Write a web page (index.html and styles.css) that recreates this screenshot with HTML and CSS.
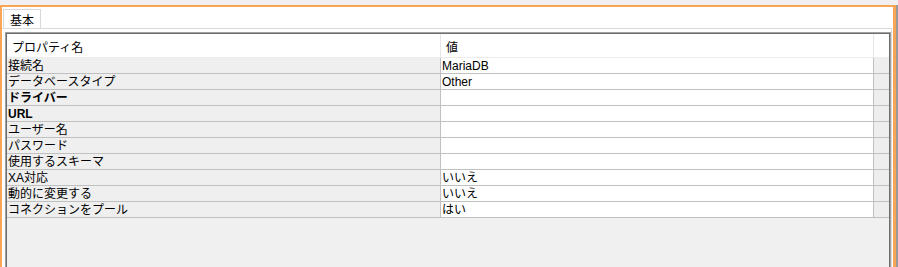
FILE: index.html
```html
<!DOCTYPE html>
<html lang="ja">
<head>
<meta charset="utf-8">
<link rel="stylesheet" href="styles.css">
</head>
<body>
<div class="screen">
  <div class="topband"></div>
  <div class="outer">
    <div class="frame">
      <div class="tabs"><div class="tab">基本</div></div>
      <div class="panel">
        <div class="grid">
          <div class="row head">
            <div class="cell label">プロパティ名</div>
            <div class="cell value">値</div>
            <div class="cell pad"></div>
          </div>
          <div class="row"><div class="cell label">接続名</div><div class="cell value">MariaDB</div><div class="cell pad"></div></div>
          <div class="row"><div class="cell label">データベースタイプ</div><div class="cell value">Other</div><div class="cell pad"></div></div>
          <div class="row"><div class="cell label bold">ドライバー</div><div class="cell value"></div><div class="cell pad"></div></div>
          <div class="row"><div class="cell label bold">URL</div><div class="cell value"></div><div class="cell pad"></div></div>
          <div class="row"><div class="cell label">ユーザー名</div><div class="cell value"></div><div class="cell pad"></div></div>
          <div class="row"><div class="cell label">パスワード</div><div class="cell value"></div><div class="cell pad"></div></div>
          <div class="row"><div class="cell label">使用するスキーマ</div><div class="cell value"></div><div class="cell pad"></div></div>
          <div class="row"><div class="cell label">XA対応</div><div class="cell value">いいえ</div><div class="cell pad"></div></div>
          <div class="row"><div class="cell label">動的に変更する</div><div class="cell value">いいえ</div><div class="cell pad"></div></div>
          <div class="row"><div class="cell label">コネクションをプール</div><div class="cell value">はい</div><div class="cell pad"></div></div>
        </div>
      </div>
    </div>
  </div>
</div>
</body>
</html>
```
FILE: styles.css
```css
* { box-sizing: border-box; }
html, body { margin: 0; padding: 0; }
body {
  background: #f0f0f0;
  font-family: "Liberation Sans", "Noto Sans CJK JP", sans-serif;
  font-size: 12px;
  color: #000;
}
.screen {
  width: 898px;
  height: 267px;
  overflow: hidden;
  display: flex;
  flex-direction: column;
}
.topband { height: 5px; background: #f0f0f0; flex: none; }
.outer {
  flex: 1;
  display: flex;
  border-right: 2px solid #9a9a9a;
}
.frame {
  flex: 1;
  display: flex;
  flex-direction: column;
  background: #fff;
  border-top: 2px solid #f8a557;
  border-left: 2px solid #f8a557;
  border-right: 3px solid #f8a557;
}
.tabs {
  height: 21px;
  flex: none;
  display: flex;
  align-items: flex-end;
  padding-left: 1px;
}
.tab {
  width: 38px;
  height: 19px;
  border: 1px solid #d9d9d9;
  border-bottom: none;
  background: #fff;
  padding-left: 6px;
  line-height: 19px;
  font-size: 12px;
  font-family: "Noto Sans CJK JP", sans-serif;
}
.panel {
  flex: 1;
  display: flex;
  flex-direction: column;
  border-top: 1px solid #d9d9d9;
  border-right: 1px solid #d9d9d9;
  margin-right: 1px;
  padding: 3px 0 0 3px;
  background: #fff;
}
.grid {
  flex: 1;
  background: #f0f0f0;
  border-top: 1px solid #a0a0a0;
  border-left: 1px solid #a0a0a0;
  border-right: 1px solid #a0a0a0;
  box-shadow: inset 1px 1px 0 #6d6d6d, inset -1px 0 0 #6d6d6d;
  padding: 1px 1px 0 1px;
}
.row {
  display: grid;
  grid-template-columns: 434px 433px 15px;
  height: 16px;
}
.cell {
  border-right: 1px solid #c0c0c0;
  border-bottom: 1px solid #c0c0c0;
  line-height: 17px;
  white-space: nowrap;
  overflow: hidden;
}
.cell.label {
  background: #efefef;
  padding-left: 1px;
}
.cell.value {
  background: #fff;
  padding-left: 1px;
}
.cell.pad {
  background: #eeeeee;
  border-right: none;
}
.bold { font-weight: bold; }
.row.head { height: 24px; }
.row.head .cell {
  background: #fff;
  border-right: 1px solid #e6e6e6;
  border-bottom: 1px solid #ececec;
  padding-top: 3px;
  line-height: 22px;
}
.row.head .cell.label { padding-left: 5px; }
.row.head .cell.value { padding-left: 5px; }
.row.head .cell.pad { border-right: none; }
```
